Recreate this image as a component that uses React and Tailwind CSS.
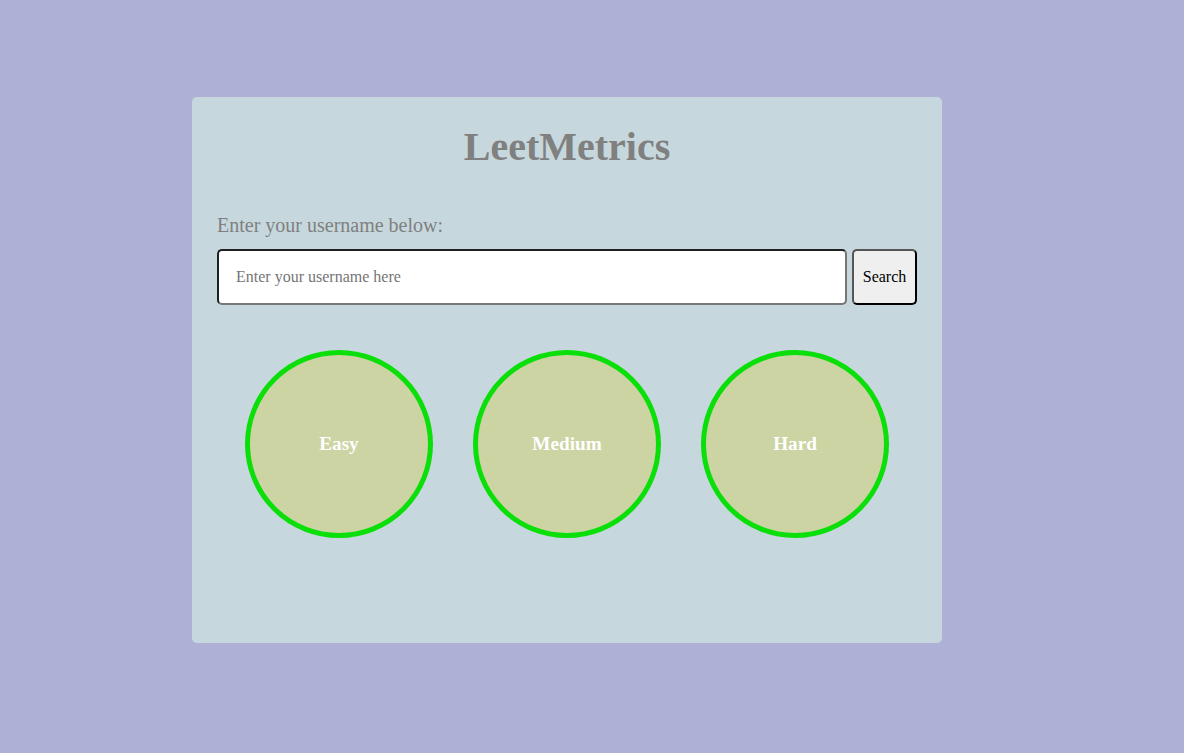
export default function App() {
  const levels = ["Easy", "Medium", "Hard"];

  return (
    <div
      className="w-screen h-screen bg-[#aeb1d5] flex pl-[192px] pt-[97px]"
      style={{ fontFamily: '"Liberation Serif", "Times New Roman", serif' }}
    >
      <div className="w-[750px] h-[546px] bg-[#c6d8dd] rounded-[5px] px-[25px] pt-[27px]">
        {/* title */}
        <h1 className="text-center text-[40px] font-bold leading-[46px] text-[#808080]">
          LeetMetrics
        </h1>

        {/* search */}
        <p className="mt-[44px] text-[20px] leading-[23px] text-[#808080]">
          Enter your username below:
        </p>
        <div className="mt-[12px] flex gap-[5px]">
          <input
            type="text"
            placeholder="Enter your username here"
            className="flex-1 h-[56px] bg-white border-2 border-[#1f1f1f] border-r-[#777] border-b-[#777] rounded-[5px] px-[17px] text-[16px] text-black placeholder:text-[#757575] outline-none"
          />
          <button className="w-[65px] h-[56px] bg-[#efefef] border-2 border-[#555] border-r-black border-b-black rounded-[5px] text-[16px] text-black">
            Search
          </button>
        </div>

        {/* stats */}
        <div className="mt-[45px] flex justify-center gap-[40px]">
          {levels.map((l) => (
            <div
              key={l}
              className="w-[188px] h-[188px] rounded-full border-[5px] border-[#0adf0a] bg-[#cdd4a3] flex items-center justify-center"
            >
              <span className="text-white font-bold text-[19.2px] leading-[22px]">{l}</span>
            </div>
          ))}
        </div>
      </div>
    </div>
  );
}
